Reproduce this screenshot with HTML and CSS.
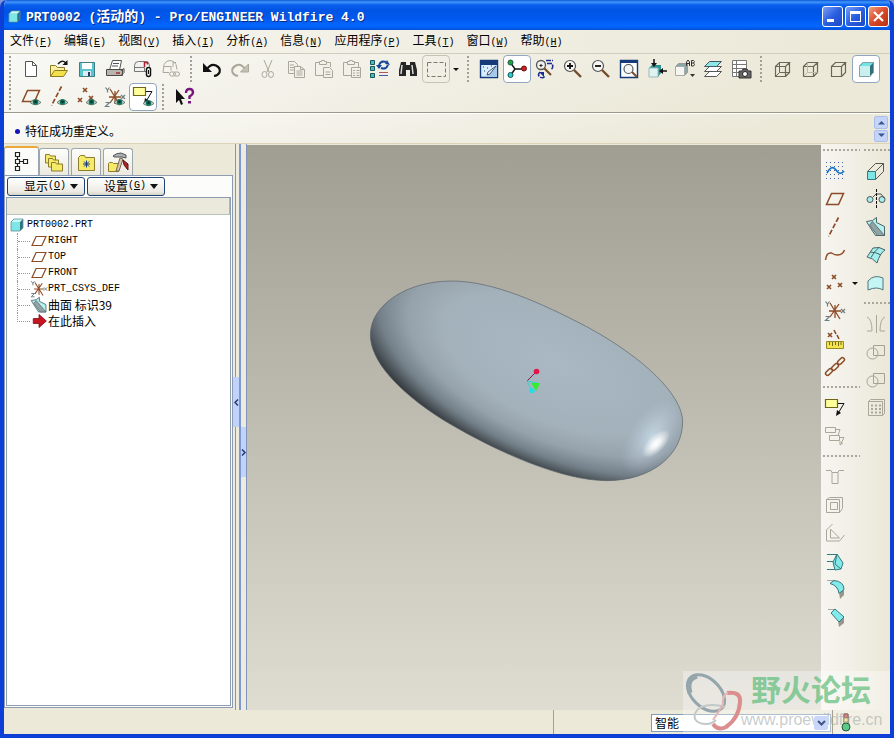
FILE: index.html
```html
<!DOCTYPE html>
<html lang="zh-CN">
<head>
  <meta charset="UTF-8">
  <meta name="viewport" content="width=device-width, initial-scale=1.0">
  <title>PRT0002 (活动的) - Pro/ENGINEER Wildfire 4.0</title>
  <link rel="stylesheet" href="styles.css">
</head>
<body>
  <!-- Shared icon parts -->
  <svg class="defs" width="0" height="0" aria-hidden="true">
    <symbol id="eye" viewBox="0 0 11 8">
      <path d="M0 4.500Q5.500-1.500 11 4.500Q5.500 9 0 4.500z" fill="#c4d4cc" stroke="#4d6a5e" stroke-width=".8"/>
      <circle cx="5.500" cy="4" r="2.800" fill="#0d7259"/><circle cx="5.500" cy="3.800" r="1.200" fill="#052f2a"/>
    </symbol>
    <symbol id="plane" viewBox="0 0 22 22">
      <path d="M7.500 5.500h12l-5 11h-12z" fill="none" stroke="#8d4b27" stroke-width="1.500"/>
    </symbol>
    <symbol id="axis" viewBox="0 0 22 22">
      <path d="M14.500 1.500L4.500 20.500" fill="none" stroke="#8d4b27" stroke-width="1.700" stroke-dasharray="5 2"/>
    </symbol>
    <symbol id="points" viewBox="0 0 22 22">
      <path d="M8 3l4 4m0-4l-4 4M3 13l4 4m0-4l-4 4M14 11l4 4m0-4l-4 4" fill="none" stroke="#8d4b27" stroke-width="1.600"/>
    </symbol>
    <symbol id="csys" viewBox="0 0 22 22">
      <path d="M5 11h12M6 3l10 16M15 4L6 17M11 5v13" fill="none" stroke="#8d4b27" stroke-width="1.300"/>
      <path d="M1.500 1.500l2 2.500 2-2.500M3.500 4v2.500M1.500 16.500h4l-4 4h4M17 9l4 4m0-4l-4 4" fill="none" stroke="#6b7f86" stroke-width="1.200"/>
    </symbol>
    <symbol id="annot" viewBox="0 0 22 22">
      <path d="M1.500 2.500h12v8h-12z" fill="#ffff9c" stroke="#6d6517" stroke-width="1.200"/>
      <path d="M14 6.500h6l-6 10" fill="none" stroke="#111"/><path d="M12 19l1-6 4 3z" fill="#111"/>
    </symbol>
    <symbol id="box" viewBox="0 0 22 22">
      <path d="M4.500 8.500h10v10h-10zM4.500 8.500l4-4h10l-4 4M18.500 4.500v10l-4 4" fill="none" stroke="#6a6658" stroke-width="1.200"/>
    </symbol>
    <symbol id="solid" viewBox="0 0 14 14">
      <path d="M1 4l3-3h9v9l-3 3H1z" fill="#2d7480"/><path d="M1 4h9v9H1z" fill="#7fe6e8"/>
      <path d="M1 4l3-3h9l-3 3z" fill="#c5fbfb"/><path d="M1 4l3-3h9v9l-3 3H1z" fill="none" stroke="#5b8f96" stroke-width=".8"/>
    </symbol>
    <symbol id="surf" viewBox="0 0 22 22">
      <path d="M1.500 5.500l6-1 4-3v5l8 4v9h-9l-6-9z" fill="#b4f2ee" stroke="#4b6469"/>
      <path d="M4.500 9l3-3.500 12 14h-7z" fill="#95a2a4" stroke="#4b6469" stroke-width=".8"/>
    </symbol>
    <symbol id="bool" viewBox="0 0 22 22">
      <path d="M8.500 4.500h11v10h-11z" fill="none" stroke="#a5a294"/><circle cx="7.500" cy="12.500" r="5.500" fill="none" stroke="#a5a294"/>
    </symbol>
  </svg>

  <div class="window">
    <header class="titlebar">
      <svg class="app-icon" viewBox="0 0 14 14"><use href="#solid"/></svg>
      <h1><span class="latin">PRT0002 (</span>活动的<span class="latin">) - Pro/ENGINEER Wildfire 4.0</span></h1>
      <div class="controls">
        <button type="button" aria-label="最小化"><svg viewBox="0 0 19 19"><path d="M4 12h7v3H4z" fill="#fff"/></svg></button>
        <button type="button" aria-label="最大化"><svg viewBox="0 0 19 19"><path d="M4 4h11v11H4zM5 7v7h9V7z" fill="#fff" fill-rule="evenodd"/></svg></button>
        <button type="button" class="close" aria-label="关闭"><svg viewBox="0 0 19 19"><path d="M5 5l9 9m0-9l-9 9" stroke="#fff" stroke-width="2.200"/></svg></button>
      </div>
    </header>

    <nav class="menubar">
      <button type="button">文件<span class="latin">(<u>F</u>)</span></button>
      <button type="button">编辑<span class="latin">(<u>E</u>)</span></button>
      <button type="button">视图<span class="latin">(<u>V</u>)</span></button>
      <button type="button">插入<span class="latin">(<u>I</u>)</span></button>
      <button type="button">分析<span class="latin">(<u>A</u>)</span></button>
      <button type="button">信息<span class="latin">(<u>N</u>)</span></button>
      <button type="button">应用程序<span class="latin">(<u>P</u>)</span></button>
      <button type="button">工具<span class="latin">(<u>T</u>)</span></button>
      <button type="button">窗口<span class="latin">(<u>W</u>)</span></button>
      <button type="button">帮助<span class="latin">(<u>H</u>)</span></button>
    </nav>

    <div class="toolbars">
      <div class="toolbar">
        <span class="grip"></span>
        <button type="button" class="tool" aria-label="新建"><svg viewBox="0 0 22 22"><path d="M5.500 3.500h7l4 4v11h-11z" fill="#fff" stroke="#555"/><path d="M12.500 3.500v4h4" fill="none" stroke="#555"/></svg></button>
        <button type="button" class="tool" aria-label="打开"><svg viewBox="0 0 22 22"><path d="M2.500 18.500v-11h5l2 2h7v3" fill="#f8f0a0" stroke="#8a7d22"/><path d="M2.500 18.500l4-6h13l-4 6z" fill="#f3e04c" stroke="#8a7d22"/><path d="M10 6q4-5 8-1" fill="none" stroke="#111" stroke-width="1.300"/><path d="M19.500 2v5h-5z" fill="#111"/></svg></button>
        <button type="button" class="tool" aria-label="保存"><svg viewBox="0 0 22 22"><path d="M3.500 4.500h15v14h-15z" fill="#5cc4cc" stroke="#3e7d84"/><path d="M6 5h10v6H6z" fill="#fff"/><path d="M7 13h8v5H7z" fill="#d8eef0"/><path d="M12 14h2v4h-2z" fill="#336"/></svg></button>
        <button type="button" class="tool" aria-label="打印"><svg viewBox="0 0 22 22"><path d="M5.500 12l3-9.500h9l-2 9.500" fill="#fff" stroke="#555"/><path d="M9 5.500h6M8 8h6" stroke="#555"/><path d="M2.500 11.500h16v6h-16z" fill="#b9b4ae" stroke="#4c4844"/><path d="M3 17.500h14l3-3v-4l-3 2" fill="none" stroke="#4c4844"/><path d="M12 15h4" stroke="#a03030" stroke-width="1.500"/></svg></button>
        <button type="button" class="tool" aria-label="邮寄"><svg viewBox="0 0 22 22"><path d="M2.500 13.500v-6q0-4 4-4h7q4 0 4 5v5z" fill="#f2f2f0" stroke="#777"/><path d="M2.500 9.500h10v4" fill="none" stroke="#777"/><path d="M12.500 9V4.500h3v2" fill="none" stroke="#b02030" stroke-width="1.500"/><rect x="14.500" y="9.500" width="4" height="9" rx="2" fill="#fff" stroke="#111" stroke-width="1.500"/><path d="M16.500 12v4" stroke="#111"/></svg></button>
        <button type="button" class="tool off" aria-label="邮寄链接"><svg viewBox="0 0 22 22"><path d="M3 14.500l1-8q2-4 6-4t6 4l1 5M3 14.500h6M4 8.500h7v4M13 9V4.500h3"/><rect x="9.500" y="14" width="6" height="4" rx="2"/><rect x="13.500" y="14" width="6" height="4" rx="2"/></svg></button>
        <span class="grip"></span>
        <button type="button" class="tool" aria-label="撤消"><svg viewBox="0 0 22 22"><path d="M6 11q4-6 9-3.500t3.500 7q-1.500 3-5.500 3.500" fill="none" stroke="#111" stroke-width="2.200"/><path d="M2 5v9h9z" fill="#111"/></svg></button>
        <button type="button" class="tool off" aria-label="重做"><svg viewBox="0 0 22 22"><path d="M16 11q-4-6-9-3.500t-3.500 7q1.500 3 5.500 3.500" stroke-width="2"/><path d="M19.500 6v8h-8z" fill="#c4c1b4"/></svg></button>
        <button type="button" class="tool off" aria-label="剪切"><svg viewBox="0 0 22 22"><path d="M7 2l5 12M15 2l-5 12"/><ellipse cx="7.500" cy="16.500" rx="2.500" ry="3"/><ellipse cx="14" cy="16.500" rx="2.500" ry="3"/></svg></button>
        <button type="button" class="tool off" aria-label="复制"><svg viewBox="0 0 22 22"><path d="M9 15.500H3.500v-12h6l3 3V9M5 7h4M5 9.500h4M5 12h4M9.500 8.500h6l4 3v8h-10zM11.500 13h6M11.500 15h6M11.500 17h6M15.500 8.500v3h4"/></svg></button>
        <button type="button" class="tool off" aria-label="粘贴"><svg viewBox="0 0 22 22"><path d="M10 17.500H2.500v-13H6M14 4.500h3.500V9M6.500 6.500h7v-3h-2v-1h-3v1h-2zM10.500 9.500h6l3 3v7h-9zM12.500 14h5M12.500 16.500h5"/></svg></button>
        <button type="button" class="tool off" aria-label="选择性粘贴"><svg viewBox="0 0 22 22"><path d="M10 17.500H2.500v-13H6M14 4.500h3.500V9M6.500 6.500h7v-3h-2v-1h-3v1h-2zM10.500 9.500h9v10h-9zM12 12.500h2M15.500 12.500h3M12 15h2M15.500 15h3M12 17.500h2M15.500 17.500h3"/></svg></button>
        <button type="button" class="tool" aria-label="再生"><svg viewBox="0 0 22 22"><path d="M1.500 2.500h4v4h-4zM1.500 8.500h4v4h-4zM1.500 15.500h4v4h-4z" fill="#50b9b9" stroke="#17595b"/><path d="M10 7q2-5 7-3M19 7q-2 5-7 3" fill="none" stroke="#14489c" stroke-width="2"/><path d="M16 6l5 1-3-5zM7 7h6l-3 4z" fill="#14489c"/><path d="M10 14.500h9" stroke="#b45563"/><path d="M10 17.500h9" stroke="#4058a8"/></svg></button>
        <button type="button" class="tool" aria-label="查找"><svg viewBox="0 0 22 22"><path d="M4 4h5v3h4V4h5l2 8v6h-7v-6h-4v6H2v-6z" fill="#262626"/><path d="M5 7l-1 9M15 7l1 9" stroke="#ddd" stroke-width="1.500"/></svg></button>
        <button type="button" class="tool framed" aria-label="框选"><svg viewBox="0 0 22 22"><path d="M2.500 4.500h18v14h-18z" fill="none" stroke="#7d7a6d" stroke-dasharray="4 2"/></svg></button>
        <button type="button" class="drop" aria-label="选择方式"></button>
        <span class="grip"></span>
        <button type="button" class="tool" aria-label="重画"><svg viewBox="0 0 22 22"><path d="M2.500 2.500h17v17h-17z" fill="#d9efff" stroke="#16397a" stroke-width="1.400"/><path d="M2 2h18v5H2z" fill="#16397a"/><path d="M19 7v12H7z" fill="#a6cbea"/><path d="M18 8l-6 8-3 1 1-3z" fill="#eef7fc" stroke="#457"/><path d="M5 9h1M9 10h1M6 13h1M13 8h1" stroke="#16397a"/></svg></button>
        <button type="button" class="tool on" aria-label="旋转中心"><svg viewBox="0 0 22 22"><path d="M4 4l5 7h10M9 11l-5 7" fill="none" stroke="#111" stroke-width="1.400"/><circle cx="4.500" cy="4.500" r="2.500" fill="#22a43c" stroke="#154"/><circle cx="18" cy="10.500" r="2.500" fill="#cc2222" stroke="#611"/><circle cx="4.500" cy="17" r="2.500" fill="#2fcccd" stroke="#155"/></svg></button>
        <button type="button" class="tool" aria-label="定向模式"><svg viewBox="0 0 22 22"><circle cx="7" cy="7" r="4.500" fill="#eee" stroke="#555" stroke-width="1.300"/><path d="M10 10l7 7" stroke="#764d2c" stroke-width="2.200"/><path d="M5.500 7.500h3M7 6v3" stroke="#222"/><path d="M12 2.500h7M13 5.500h5q2 4-1 6M6 14q-3 3 0 5t5-1" fill="none" stroke="#1c2c90" stroke-width="1.500" stroke-dasharray="5 1"/><path d="M5 14h5v5z" fill="#1c2c90"/></svg></button>
        <button type="button" class="tool" aria-label="放大"><svg viewBox="0 0 22 22"><circle cx="8" cy="8" r="5.500" fill="#f6f6f2" stroke="#555" stroke-width="1.200"/><path d="M12 12l7 7" stroke="#764d2c" stroke-width="2.400"/><path d="M5 8h6M8 5v6" stroke="#111" stroke-width="1.800"/></svg></button>
        <button type="button" class="tool" aria-label="缩小"><svg viewBox="0 0 22 22"><circle cx="8" cy="8" r="5.500" fill="#f6f6f2" stroke="#555" stroke-width="1.200"/><path d="M12 12l7 7" stroke="#764d2c" stroke-width="2.400"/><path d="M5 8h6" stroke="#111" stroke-width="1.800"/></svg></button>
        <button type="button" class="tool" aria-label="重新调整"><svg viewBox="0 0 22 22"><path d="M2.500 2.500h17v17h-17z" fill="#fff" stroke="#16397a" stroke-width="1.400"/><path d="M2 2h18v3H2z" fill="#16397a"/><circle cx="10.500" cy="11" r="4.500" fill="#f3f6f6" stroke="#555" stroke-width="1.200"/><path d="M14 14l5 5" stroke="#764d2c" stroke-width="2"/></svg></button>
        <button type="button" class="tool" aria-label="重定向"><svg viewBox="0 0 22 22"><path d="M3 10l3-3h9v8l-3 4H3z" fill="#2f9292"/><path d="M3 10h9v9H3z" fill="#dff3f0" stroke="#9bb"/><path d="M8 1v6M21 13h-6" stroke="#111" stroke-width="1.500"/><path d="M5 5h6l-3 4zM17 10v6l-4-3z" fill="#111"/></svg></button>
        <button type="button" class="tool" aria-label="已命名视图"><svg viewBox="0 0 22 22"><path d="M1.500 8.500l3-3h9v9l-3 3" fill="#8aa8a8" stroke="#999"/><path d="M1.500 8.500h9v9h-9z" fill="#f5f6f0" stroke="#aaa"/><path d="M12.500 8V4l1.500-2 1.500 2v4M12.500 5.500h3M17.500 8V2.500h2l1 1-1 1.500 1 1.500-1 1.500zM17.500 5h2" fill="none" stroke="#333"/><path d="M16 16h5l-2.500 3z" fill="#333"/></svg></button>
        <button type="button" class="tool" aria-label="层"><svg viewBox="0 0 22 22"><path d="M2.500 18.500l5-5h12l-5 5z" fill="#fff" stroke="#555"/><path d="M2.500 13.500l5-5h12l-5 5z" fill="#fff" stroke="#555"/><path d="M2.500 8.500l5-5h12l-5 5z" fill="#8ce8e6" stroke="#456"/></svg></button>
        <button type="button" class="tool" aria-label="视图管理器"><svg viewBox="0 0 22 22"><path d="M2.500 2.500h14v16h-14zM2.500 6.500h14M2.500 10.500h14M2.500 14.500h14M6.500 2.500v16" fill="#fff" stroke="#777"/><path d="M9 13h3l1-2h4l1 2h3v7H9z" fill="#666" stroke="#333"/><circle cx="15" cy="16" r="2.500" fill="#fff" stroke="#222"/></svg></button>
        <span class="grip"></span>
        <button type="button" class="tool" aria-label="线框"><svg viewBox="0 0 22 22"><use href="#box"/><path d="M8.500 4.500v10h10M8.500 14.500l-4 4" fill="none" stroke="#6a6658"/></svg></button>
        <button type="button" class="tool" aria-label="隐藏线"><svg viewBox="0 0 22 22"><use href="#box"/><path d="M8.500 4.500v10h10M8.500 14.500l-4 4" fill="none" stroke="#bbb8aa"/></svg></button>
        <button type="button" class="tool" aria-label="无隐藏线"><svg viewBox="0 0 22 22"><use href="#box"/></svg></button>
        <button type="button" class="tool on" aria-label="着色"><svg viewBox="0 0 22 22"><path d="M4 8l4-4h11v10l-4 5H4z" fill="#336f78"/><path d="M4 8h11v11H4z" fill="#c9efef"/><path d="M4 8l4-4h11l-4 4z" fill="#75e4e4"/><path d="M4.500 8.500l4-4h10v10l-4 4h-10z" fill="none" stroke="#7ba4a6"/></svg></button>
      </div>
      <div class="toolbar">
        <span class="grip"></span>
        <button type="button" class="tool" aria-label="平面显示"><svg viewBox="0 0 22 22"><use href="#plane" y="-1"/><use href="#eye" x="10" y="12" width="11" height="8"/></svg></button>
        <button type="button" class="tool" aria-label="轴显示"><svg viewBox="0 0 22 22"><use href="#axis" x="-1" y="-1"/><use href="#eye" x="9" y="12" width="11" height="8"/></svg></button>
        <button type="button" class="tool" aria-label="点显示"><svg viewBox="0 0 22 22"><use href="#points" x="-1" y="-1"/><use href="#eye" x="10" y="12" width="11" height="8"/></svg></button>
        <button type="button" class="tool" aria-label="坐标系显示"><svg viewBox="0 0 22 22"><use href="#csys"/><use href="#eye" x="10" y="12" width="11" height="8"/></svg></button>
        <button type="button" class="tool on" aria-label="注释显示"><svg viewBox="0 0 22 22"><use href="#annot" y="-1"/><use href="#eye" x="11" y="13" width="11" height="8"/></svg></button>
        <span class="grip"></span>
        <button type="button" class="tool" aria-label="上下文帮助"><svg viewBox="0 0 22 22"><path d="M3 3v14l3-3 2 5 2-1-2-5h4z" fill="#111"/><path d="M13 7q0-4 3.500-4T20 6.500q0 2-3.500 4V13" fill="none" stroke="#7a1480" stroke-width="2.400"/><path d="M15 15h3v2.500h-3z" fill="#7a1480"/></svg></button>
      </div>
    </div>

    <div class="messages">
      <p>特征成功重定义。</p>
      <div class="spin">
        <button type="button" aria-label="向上"><svg viewBox="0 0 7 5"><path d="M0 4.500L3.500 1 7 4.500z"/></svg></button>
        <button type="button" aria-label="向下"><svg viewBox="0 0 7 5"><path d="M0 .5L3.500 4 7 .5z"/></svg></button>
      </div>
    </div>

    <main class="workspace">
      <aside class="navigator">
        <div class="tabs">
          <button type="button" class="tab active" aria-label="模型树"><svg viewBox="0 0 22 22"><path d="M4.500 1.500h4v4h-4zM4.500 8.500h4v4h-4zM4.500 15.500h4v4h-4zM12.500 8.500h4v4h-4zM6.500 5.500v3M6.500 12.500v3M8.500 10.500h4" fill="#fff" stroke="#222" stroke-width="1.200"/></svg></button>
          <button type="button" class="tab" aria-label="文件夹浏览器"><svg viewBox="0 0 22 22"><g fill="#f6ea6a" stroke="#8b7d2b"><path d="M2.500 3.500h4l1 1.500h5v7h-10z"/><path d="M5.500 7.500h4l1 1.500h5v7h-10z"/><path d="M8.500 11.500h4l1 1.500h6v7h-11z"/></g></svg></button>
          <button type="button" class="tab" aria-label="收藏夹"><svg viewBox="0 0 22 22"><path d="M3.500 19.500v-13l2-2h4l1 2h9v13z" fill="#f6ea6a" stroke="#8b7d2b"/><path d="M8 13h7M11.500 9.500v7M9 10.500l5 5M14 10.500l-5 5" stroke="#193d80"/></svg></button>
          <button type="button" class="tab" aria-label="连接"><svg viewBox="0 0 22 22"><path d="M1.500 20.500v-8l1-1h3l1 1h5v8z" fill="#f6ea6a" stroke="#8b7d2b"/><path d="M6 5q3-3 8-3l5 2v3l-4-1H7z" fill="#aab1b5" stroke="#555"/><path d="M13 7l-4 13h3l4-12z" fill="#d5c5b2" stroke="#765"/><path d="M16 9l5 4v6l-4-5z" fill="#a9252c" stroke="#611"/></svg></button>
        </div>
        <div class="panel">
          <div class="panel-actions">
            <button type="button">显示<span class="latin">(<u>O</u>)</span></button>
            <button type="button">设置<span class="latin">(<u>G</u>)</span></button>
          </div>
          <div class="tree-box">
            <div class="tree-header"></div>
            <div class="tree">
              <div class="node root"><svg viewBox="0 0 14 14"><use href="#solid"/></svg><span class="latin">PRT0002.PRT</span></div>
              <ul>
                <li class="node"><svg viewBox="0 0 22 22"><use href="#plane"/></svg><span class="latin">RIGHT</span></li>
                <li class="node"><svg viewBox="0 0 22 22"><use href="#plane"/></svg><span class="latin">TOP</span></li>
                <li class="node"><svg viewBox="0 0 22 22"><use href="#plane"/></svg><span class="latin">FRONT</span></li>
                <li class="node"><svg viewBox="0 0 22 22"><use href="#csys"/></svg><span class="latin">PRT_CSYS_DEF</span></li>
                <li class="node"><svg viewBox="0 0 22 22"><use href="#surf"/></svg><span>曲面 标识39</span></li>
                <li class="node"><svg viewBox="0 0 22 22"><path d="M4 8h7V3l9 8-9 8v-5H4z" fill="#c81420" stroke="#7c1018"/></svg><span>在此插入</span></li>
              </ul>
            </div>
          </div>
        </div>
      </aside>

      <div class="splitter">
        <div class="rail"><button type="button" aria-label="收起导航器"><svg viewBox="0 0 5 7"><path d="M4 .5l-3 3 3 3"/></svg></button></div>
        <div class="rail second"><button type="button" aria-label="展开浏览器"><svg viewBox="0 0 5 7"><path d="M1 .5l3 3-3 3"/></svg></button></div>
      </div>

      <section class="viewport">
        <svg viewBox="0 0 574 565" role="img" aria-label="椭球曲面">
          <defs>
            <radialGradient id="body" gradientUnits="userSpaceOnUse" cx=".12" cy="-.35" r="1.340" gradientTransform="translate(500 333) rotate(23.500) scale(490 235)">
              <stop offset="0" stop-color="#a9b8c2"/><stop offset=".55" stop-color="#a3b1bb"/>
              <stop offset=".72" stop-color="#95a2ac"/><stop offset=".86" stop-color="#75818a"/>
              <stop offset=".94" stop-color="#50595f"/><stop offset="1" stop-color="#34393d"/>
            </radialGradient>
            <radialGradient id="glow">
              <stop offset="0" stop-color="#c8dae8" stop-opacity=".9"/><stop offset="1" stop-color="#b5c5d1" stop-opacity="0"/>
            </radialGradient>
            <radialGradient id="spot">
              <stop offset="0" stop-color="#fff"/><stop offset=".3" stop-color="#fff" stop-opacity=".85"/><stop offset="1" stop-color="#fff" stop-opacity="0"/>
            </radialGradient>
          </defs>
          <g transform="translate(113 125) scale(.3333)">
            <path d="M31 195C31 105 140 33 275 33C400 33 545 100 680 170C850 262 968 375 968 455C968 555 875 632 740 632C600 632 400 540 250 450C110 362 31 270 31 195z" fill="url(#body)" stroke="#59626a" stroke-width="2"/>
            <ellipse cx="875" cy="500" rx="130" ry="68" transform="rotate(-55 875 500)" fill="url(#glow)"/>
            <ellipse cx="888" cy="521" rx="54" ry="26" transform="rotate(-45 888 521)" fill="url(#spot)"/>
          </g>
          <path d="M280 236l9-9" stroke="#8c1744"/><circle cx="289.500" cy="226.500" r="2.800" fill="#e3164a"/>
          <path d="M280 236l5 10M280 236l10 2" stroke="#2fd5cf"/>
          <path d="M284 238h9l-4 8z" fill="#35ec2d"/><circle cx="285" cy="245.500" r="2.600" fill="#1fdfe9"/>
        </svg>
      </section>

      <div class="feature-bars">
        <div class="column wide">
          <span class="hgrip"></span>
          <button type="button" class="tool" aria-label="草绘"><svg viewBox="0 0 22 22"><path d="M2 2.500h18M2 6.500h18M2 10.500h18M2 14.500h18M2 18.500h18" stroke="#4867a8" stroke-dasharray="1 3"/><path d="M3 13q5-9 9-3t8 1" fill="none" stroke="#1673c4" stroke-width="1.700"/></svg></button>
          <button type="button" class="tool" aria-label="基准平面"><svg viewBox="0 0 22 22"><use href="#plane"/></svg></button>
          <button type="button" class="tool" aria-label="基准轴"><svg viewBox="0 0 22 22"><use href="#axis"/></svg></button>
          <button type="button" class="tool" aria-label="基准曲线"><svg viewBox="0 0 22 22"><path d="M1.500 16q1-8 6-7 3 2 6 2 5 0 7-5" fill="none" stroke="#8d4b27" stroke-width="1.500"/></svg></button>
          <div class="split">
            <button type="button" class="tool" aria-label="基准点"><svg viewBox="0 0 22 22"><use href="#points"/></svg></button>
            <button type="button" class="drop" aria-label="更多基准点"></button>
          </div>
          <button type="button" class="tool" aria-label="基准坐标系"><svg viewBox="0 0 22 22"><use href="#csys"/></svg></button>
          <button type="button" class="tool" aria-label="分析特征"><svg viewBox="0 0 22 22"><path d="M4 5l4 4m0-4L4 9M10 2l2 4M13 7l2 4" fill="none" stroke="#8d4b27" stroke-width="1.600"/><path d="M2.500 13.500h17v7h-17z" fill="#f2e34e" stroke="#9a8a22"/><path d="M5.500 14v3M8.500 14v4M11.500 14v3M14.500 14v4M17 14v3" stroke="#756a18"/></svg></button>
          <button type="button" class="tool" aria-label="参照"><svg viewBox="0 0 22 22"><g fill="none" stroke="#8d4b27" stroke-width="1.500"><rect x="1" y="14" width="8" height="4" rx="2" transform="rotate(-45 5 16)"/><rect x="7" y="9" width="8" height="4" rx="2" transform="rotate(-45 11 11)"/><rect x="13" y="3" width="8" height="4" rx="2" transform="rotate(-45 17 5)"/></g></svg></button>
          <span class="hgrip"></span>
          <button type="button" class="tool" aria-label="注释特征"><svg viewBox="0 0 22 22"><use href="#annot"/></svg></button>
          <button type="button" class="tool off" aria-label="传播注释"><svg viewBox="0 0 22 22"><path d="M1.500 2.500h10v5h-10zM5.500 10.500h10v5h-10zM12 4.500h4l-2 6M15 12.500h5l-3 6M16 16v4l3-2"/></svg></button>
          <span class="hgrip"></span>
          <button type="button" class="tool off" aria-label="孔"><svg viewBox="0 0 22 22"><path d="M2 4.500h5l1 2v11h6v-11l1-2h5M8 6.500h6"/></svg></button>
          <button type="button" class="tool off" aria-label="壳"><svg viewBox="0 0 22 22"><path d="M2.500 5.500l3-2h13v11l-3 4h-13zM2.500 5.500h13v13M6.500 8.500h7v7h-7z"/></svg></button>
          <button type="button" class="tool off" aria-label="筋"><svg viewBox="0 0 22 22"><path d="M2.500 8l6-6M2.500 8v11h13l5-6M6.500 7v9h9z"/></svg></button>
          <button type="button" class="tool" aria-label="拔模"><svg viewBox="0 0 22 22"><path d="M3 4.500h10M3 11.500h6M3 19.500h8" stroke="#367a7d"/><path d="M9 12l4-8 6 9-2 6-6 1z" fill="#82eaea" stroke="#367a7d"/><path d="M13 4l-2 10 6 5" fill="none" stroke="#367a7d"/></svg></button>
          <button type="button" class="tool" aria-label="倒圆角"><svg viewBox="0 0 22 22"><path d="M15 14l5-2v5l-4 4z" fill="#98958a"/><path d="M3 2.500h8" stroke="#aaa"/><path d="M6 5.500l4-3q10 1 10 9l-5 4q-1-8-9-10z" fill="#82eaea" stroke="#367a7d"/></svg></button>
          <button type="button" class="tool" aria-label="倒角"><svg viewBox="0 0 22 22"><path d="M14 15l6-4v6l-5 4z" fill="#98958a"/><path d="M4 3.500h7" stroke="#aaa"/><path d="M7 7l4-4 9 8-5 5z" fill="#82eaea" stroke="#367a7d"/></svg></button>
        </div>
        <div class="column">
          <span class="hgrip"></span>
          <button type="button" class="tool" aria-label="拉伸"><svg viewBox="0 0 22 22"><path d="M2.500 11.500h8v8h-8z" fill="#7de6e6" stroke="#367a7d"/><path d="M2.500 11.500l8-8h8v8l-8 8M10.500 11.500l8-8" fill="none" stroke="#555"/></svg></button>
          <button type="button" class="tool" aria-label="旋转"><svg viewBox="0 0 22 22"><circle cx="5" cy="11.500" r="3" fill="#a5eeee" stroke="#555"/><circle cx="17" cy="11.500" r="3" fill="#a5eeee" stroke="#555"/><path d="M8 9l3-3h5l4 5" fill="none" stroke="#555"/><path d="M11.500 1v20" stroke="#111" stroke-dasharray="3 1"/></svg></button>
          <button type="button" class="tool" aria-label="可变剖面扫描"><svg viewBox="0 0 22 22"><use href="#surf"/></svg></button>
          <button type="button" class="tool" aria-label="边界混合"><svg viewBox="0 0 22 22"><path d="M2 13l6-9q6-2 12 2-5 3-8 13-4-5-10-6z" fill="#a5eeee" stroke="#4b6469"/><path d="M5 8q6 0 11 3M14 3.500q-5 4-8 10" fill="none" stroke="#4b6469"/></svg></button>
          <button type="button" class="tool" aria-label="造型"><svg viewBox="0 0 22 22"><path d="M3 9q6-7 15-3v12q-6-4-15 0z" fill="#c6f5f5" stroke="#50767a"/></svg></button>
          <span class="hgrip"></span>
          <button type="button" class="tool off" aria-label="镜像"><svg viewBox="0 0 22 22"><path d="M2 4q5 2 5 14H2M20 4q-5 2-5 14h5M11.500 2v18"/></svg></button>
          <button type="button" class="tool off" aria-label="合并"><svg viewBox="0 0 22 22"><use href="#bool"/></svg></button>
          <button type="button" class="tool off" aria-label="修剪"><svg viewBox="0 0 22 22"><use href="#bool"/></svg></button>
          <button type="button" class="tool off" aria-label="阵列"><svg viewBox="0 0 22 22"><path d="M3.500 4.500l2-2h14v14l-2 2h-14zM3.500 4.500h14v14"/><path d="M6 8.500h10M6 12h10M6 15.500h10" stroke-width="2" stroke-dasharray="2 2"/></svg></button>
        </div>
      </div>
    </main>

    <footer class="statusbar">
      <div class="status-text"></div>
      <div class="filter">
        <select aria-label="选取过滤器"><option>智能</option></select>
        <span class="select-arrow"><svg viewBox="0 0 9 6"><path d="M1 1l3.500 3.500L8 1" fill="none" stroke="#41557e" stroke-width="2"/></svg></span>
      </div>
      <div class="regen">
        <svg viewBox="0 0 10 19"><path d="M3 1h4v12H3z" fill="#fffbe0" stroke="#777"/><path d="M3 1h4v4H3z" fill="#d98080" stroke="#966"/><path d="M3 5h4v4H3z" fill="#f7ed9a" stroke="#998"/><circle cx="5" cy="14" r="4" fill="#5cc98a" stroke="#28583c"/></svg>
      </div>
    </footer>

    <div class="watermark">
      <svg viewBox="0 0 60 60" fill="none">
        <ellipse cx="23" cy="22" rx="14" ry="22" transform="rotate(-46 23 22)" stroke="#94a5ac" stroke-width="3"/>
        <path d="M7 22Q3 8 14 5" stroke="#94a5ac" stroke-width="5"/>
        <path d="M44 22q14-2 13 9-1 16-14 25-8 4-13-3" stroke="#dc8d8e" stroke-width="4"/>
        <path d="M42 36q-13-4-24 0-8 5-6 12 3 5 11 5 6 0 10-4" stroke="#c3c8c8" stroke-width="2"/>
        <path d="M45 22q-6 2-5 11-4 8-10 16" stroke="#e4b6b4" stroke-width="2"/>
      </svg>
      <div class="watermark-text">
        <strong>野火论坛</strong>
        <span>www.proewildfire.cn</span>
      </div>
    </div>
  </div>
</body>
</html>
```
FILE: styles.css
```css
* {
  margin: 0;
  padding: 0;
  box-sizing: border-box;
}

body {
  background: #7d97d8;
  color: #000;
  font-family: "Noto Sans CJK SC", sans-serif;
  font-size: 12px;
  line-height: 16px;
}

button {
  border: none;
  background: none;
  color: inherit;
  font: inherit;
}

svg {
  display: block;
  flex: none;
}

.defs {
  position: absolute;
}

.latin {
  font-family: "Liberation Mono", monospace;
  font-size: 10px;
}

.window {
  position: relative;
  display: flex;
  flex-direction: column;
  height: 100vh;
  border: solid #0c3fd6;
  border-width: 0 4px 4px;
  border-radius: 7px 7px 0 0;
  background: #ece9d8;
  overflow: hidden;
}

/* Title bar */
.titlebar {
  display: flex;
  align-items: center;
  height: 30px;
  padding: 3px 2px 0 3px;
  margin: 0 -1px;
  background: linear-gradient(#0a56d8 0, #4096fb 2px, #0a5fee 5px, #0054e3 10px, #0058ee 18px, #0467ff 26px, #0350d8 100%);
  color: #fff;
}

.app-icon {
  width: 13px;
  height: 13px;
  margin: 0 5px 0 2px;
}

.titlebar h1 {
  flex: 1;
  font-size: 14px;
  font-weight: bold;
  line-height: 20px;
  text-shadow: 1px 1px #0a2a80;
  white-space: nowrap;
}

.titlebar .latin {
  font-size: 13px;
}

.controls {
  display: flex;
  gap: 2px;
}

.controls button {
  width: 21px;
  height: 21px;
  border: 1px solid #fff;
  border-radius: 3px;
  background: linear-gradient(135deg, #7aa0f4, #2a5fe0 50%, #1c49c4);
}

.controls .close {
  background: linear-gradient(135deg, #f0a080, #d9482a 50%, #b83012);
}

/* Menu */
.menubar {
  display: flex;
  gap: 12px;
  height: 23px;
  padding: 0 6px;
  background: linear-gradient(90deg, #f6f5f0, #ebe8d7);
  white-space: nowrap;
}

/* Toolbars */
.toolbars {
  padding: 1px 0;
  border-top: 1px solid #d0cdbb;
  border-bottom: 1px solid #9c998a;
  background: linear-gradient(160deg, #f8f8f5, #ece9d9 80%);
}

.toolbar {
  display: flex;
}

.grip {
  width: 13px;
  height: 26px;
  margin-top: 1px;
  background: repeating-linear-gradient(#a3a195 0 2px, transparent 2px 4px) 5px 0 / 2px 100% no-repeat;
}

.tool {
  display: flex;
  justify-content: center;
  align-items: center;
  flex: none;
  width: 28px;
  height: 28px;
  border: 1px solid transparent;
  border-radius: 4px;
}

.tool svg {
  width: 22px;
  height: 22px;
}

.tool.on {
  border-color: #90a7bf;
  background: #fff;
}

.tool.framed {
  border-color: #c6c3b5;
}

.tool.off svg {
  fill: none;
  stroke: #aaa79a;
}

.drop {
  display: flex;
  justify-content: center;
  align-items: center;
  width: 12px;
}

.drop::before,
.panel-actions button::after {
  content: "";
  border: solid transparent;
  border-width: 3px 3px 0;
  border-top-color: #111;
}

/* Message area */
.messages {
  display: flex;
  justify-content: space-between;
  height: 31px;
  padding: 2px 2px 1px 11px;
  border-top: 1px solid #fff;
  border-bottom: 1px solid #dcd4b8;
  background: linear-gradient(170deg, #fafaf8, #ece9d9 80%);
}

.messages p {
  display: flex;
  align-items: center;
  gap: 5px;
  padding-top: 4px;
}

.messages p::before {
  content: "";
  width: 5px;
  height: 5px;
  border-radius: 50%;
  background: #1414b8;
}

.spin {
  display: flex;
  flex-direction: column;
  gap: 1px;
}

.spin button {
  display: flex;
  justify-content: center;
  align-items: center;
  width: 14px;
  height: 13px;
  border: 1px solid #a9bfea;
  border-radius: 2px;
  background: #c5d5fa;
}

.spin svg {
  width: 7px;
  height: 5px;
  fill: #3c5691;
}

/* Main area */
.workspace {
  display: grid;
  grid-template-columns: 229px 14px 1fr 69px;
  flex: 1;
  min-height: 0;
}

.navigator {
  display: flex;
  flex-direction: column;
  padding: 2px 0;
}

.tabs {
  display: flex;
  align-items: flex-end;
  gap: 2px;
  height: 29px;
}

.tab {
  display: flex;
  justify-content: center;
  align-items: center;
  width: 30px;
  height: 27px;
  border: 1px solid #9aa7b0;
  border-bottom: none;
  border-radius: 3px 3px 0 0;
  background: linear-gradient(#fdfdfb, #eceadf);
}

.tab.active {
  width: 35px;
  height: 30px;
  margin: 0 -2px -1px 0;
  border-top: 2px solid #eda83a;
  background: #fbfbf9;
}

.tab svg {
  width: 22px;
  height: 22px;
}

.panel {
  display: flex;
  flex-direction: column;
  flex: 1;
  padding: 1px;
  border: 1px solid #8d9cb0;
  background: #fcfcfa;
}

.panel-actions {
  display: flex;
  gap: 2px;
  padding: 0 1px 1px;
}

.panel-actions button {
  display: flex;
  align-items: center;
  width: 78px;
  height: 19px;
  padding: 0 0 1px 16px;
  border: 1px solid #1d4275;
  border-radius: 3px;
  background: linear-gradient(#fff, #eceae2 80%, #d6d2c6);
}

.panel-actions button::after {
  margin-left: 4px;
  border-width: 5px 4px 0;
}

.tree-box {
  flex: 1;
  border: 1px solid #8d9cb0;
  background: #fff;
}

.tree-header {
  height: 17px;
  border-right: 1px solid #b9b6a6;
  border-bottom: 1px solid #b9c2b6;
  background: #ebe9dc;
}

.tree {
  padding: 2px 3px;
}

.node {
  display: flex;
  align-items: center;
  height: 16px;
  white-space: nowrap;
}

.node svg {
  width: 18px;
  height: 18px;
}

.node.root svg {
  width: 14px;
  height: 14px;
  margin-right: 3px;
}

.tree ul {
  padding-left: 7px;
  list-style: none;
}

.tree li {
  border-left: 1px dotted #9a988d;
}

.tree li::before {
  content: "";
  align-self: flex-start;
  width: 12px;
  height: 8px;
  border-bottom: 1px dotted #9a988d;
}

.tree li:last-child {
  border-left: none;
}

.tree li:last-child::before {
  border-left: 1px dotted #9a988d;
}

.splitter {
  display: grid;
  grid-template-columns: 8px 6px;
  background: #edeae0;
}

.rail {
  display: grid;
  grid-template-rows: 233px 50px;
  border-right: 2px solid #7f97d3;
  background: linear-gradient(90deg, transparent 2px, #8195bb 2px 3px, transparent 3px);
}

.rail.second {
  grid-template-rows: 283px 50px;
  border-right: 1px solid #8195bb;
  background: none;
}

.rail button {
  display: flex;
  justify-content: center;
  align-items: center;
  grid-row: 2;
  background: #c1d3fa;
}

.rail svg {
  width: 5px;
  height: 7px;
  fill: none;
  stroke: #26386e;
  stroke-width: 1.5px;
}

.viewport {
  min-width: 0;
  min-height: 0;
  margin-top: 1px;
  background: linear-gradient(#a09e93, #dfdcd2);
}

.viewport svg {
  width: 100%;
  height: 100%;
}

/* Feature toolbars */
.feature-bars {
  display: grid;
  grid-template-columns: 41px 28px;
  background: linear-gradient(90deg, #f6f5f1, #ebe8d8);
}

.column {
  display: flex;
  flex-direction: column;
}

.hgrip {
  height: 13px;
  margin: 0 2px;
  background: repeating-linear-gradient(90deg, #a9a79b 0 2px, transparent 2px 4px) 0 5px / 100% 2px no-repeat;
}

.column:not(.wide) .hgrip {
  margin-right: 0;
}

.split {
  display: flex;
}

/* Status bar */
.statusbar {
  display: flex;
  height: 24px;
  background: #ece9d8;
}

.status-text {
  width: 550px;
  border-right: 1px solid #a3a08f;
}

.filter {
  position: relative;
  width: 180px;
  margin: 4px 1px 2px auto;
}

.filter select {
  width: 100%;
  height: 18px;
  padding-left: 3px;
  border: 1px solid #7f9db9;
  border-radius: 0;
  appearance: none;
  background: #fff;
  color: #000;
  font: inherit;
}

.select-arrow {
  position: absolute;
  z-index: 1;
  top: 2px;
  right: 3px;
  display: flex;
  justify-content: center;
  align-items: center;
  width: 14px;
  height: 14px;
  border-radius: 2px;
  background: #c9d8fa;
  pointer-events: none;
}

.select-arrow svg {
  width: 9px;
  height: 6px;
}

.regen {
  position: relative;
  z-index: 1;
  width: 58px;
  padding: 3px 8px;
  border-left: 1px solid #a3a08f;
}

.regen svg {
  width: 10px;
  height: 19px;
}

/* Forum mark over the lower right corner */
.watermark {
  position: absolute;
  right: 0;
  bottom: 0;
  display: flex;
  width: 207px;
  height: 63px;
  background: rgba(255, 255, 255, 0.35);
  pointer-events: none;
}

.watermark svg {
  width: 60px;
  height: 60px;
}

.watermark-text {
  display: flex;
  flex-direction: column;
  margin-left: -2px;
  font-family: "Liberation Sans", "Noto Sans CJK SC", sans-serif;
}

.watermark strong {
  padding-left: 10px;
  color: rgba(92, 188, 120, 0.7);
  font-size: 30px;
  line-height: 40px;
}

.watermark-text span {
  color: rgba(160, 170, 170, 0.6);
  font-size: 16px;
  line-height: 18px;
}
```
